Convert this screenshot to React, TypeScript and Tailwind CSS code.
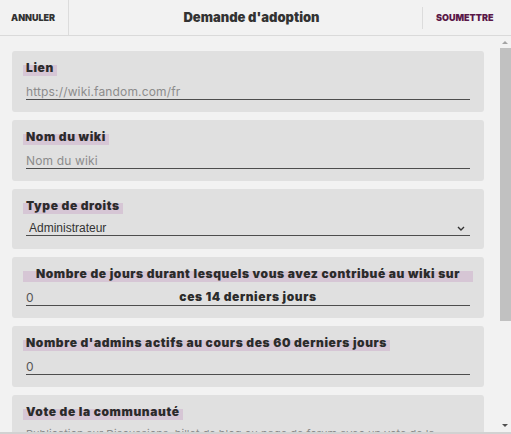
import React from "react";

const labelFont = { fontFamily: "Inter, 'Noto Sans', sans-serif" };

function Label({ children, center }: { children: React.ReactNode; center?: boolean }) {
  return (
    <div className={`flex h-[20px] items-start ${center ? "justify-center" : ""}`}>
      <span
        style={labelFont}
        className={`-mx-[3px] h-[20px] px-[3px] text-[12px] leading-[23px] font-black tracking-[0.6px] text-[#2b2b2b] bg-[linear-gradient(to_bottom,transparent_9px,#d6c6d5_9px)] ${center ? "text-center" : ""}`}
      >
        {children}
      </span>
    </div>
  );
}

function TextField({ value, placeholder }: { value?: string; placeholder?: string }) {
  return (
    <input
      readOnly
      value={value ?? ""}
      placeholder={placeholder}
      style={labelFont}
      className="block h-[24px] w-full border-b border-[#4d4d4d] bg-transparent pt-[8px] pb-[1px] text-[12px] leading-[14px] tracking-[0.15px] text-[#555] outline-none placeholder:text-[#8c8c8c]"
    />
  );
}

function Card({ children, className = "pb-[12px]" }: { children: React.ReactNode; className?: string }) {
  return <div className={`rounded-[3px] bg-[#e0e0e0] px-[14px] pt-[5px] ${className}`}>{children}</div>;
}

export default function App() {
  return (
    <div className="flex h-[434px] w-[511px] flex-col overflow-hidden bg-[#f2f2f2] text-[#333]" style={labelFont}>
      <header className="flex h-[36px] shrink-0 border-b border-[#dadada]">
        <button className="flex w-[69px] items-center border-r border-[#dcdcdc] pl-[11px] text-[9px] font-black text-[#333]">
          ANNULER
        </button>
        <h1 className="flex flex-1 items-center justify-center pl-[12px] text-[13px] font-black text-[#333]">
          Demande d'adoption
        </h1>
        <div className="flex w-[89px] items-center">
          <span className="h-[22px] w-px bg-[#dcdcdc]" />
          <button className="pl-[13px] text-[9px] font-black text-[#5a1848]">SOUMETTRE</button>
        </div>
      </header>

      <div className="flex min-h-0 flex-1 border-b-2 border-[#d2d2d2]">
        <main className="flex min-w-0 flex-1 flex-col gap-[8px] overflow-hidden pt-[15px] pr-[15px] pl-[12px]">
          <Card>
            <Label>Lien</Label>
            <TextField placeholder="https://wiki.fandom.com/fr" />
          </Card>
          <Card>
            <Label>Nom du wiki</Label>
            <TextField placeholder="Nom du wiki" />
          </Card>
          <Card className="pb-[13px]">
            <Label>Type de droits</Label>
            <div className="relative">
              <select
                defaultValue="admin"
                style={{ fontFamily: "'Liberation Sans', Arial, sans-serif" }}
                className="block h-[22px] w-full appearance-none border-b border-[#4d4d4d] bg-transparent pt-[7px] pl-[3px] text-[12px] leading-[14px] text-[#333] outline-none"
              >
                <option value="admin">Administrateur</option>
                <option value="bureaucrate">Bureaucrate</option>
              </select>
              <svg className="pointer-events-none absolute top-[12px] right-[5px]" width="8" height="5" viewBox="0 0 8 5">
                <path d="M1 1l3 3 3-3" fill="none" stroke="#333" strokeWidth="1.4" />
              </svg>
            </div>
          </Card>
          <Card>
            <Label center>Nombre de jours durant lesquels vous avez contribué au wiki sur ces 14 derniers jours</Label>
            <TextField value="0" />
          </Card>
          <Card>
            <Label>Nombre d'admins actifs au cours des 60 derniers jours</Label>
            <TextField value="0" />
          </Card>
          <Card>
            <Label>Vote de la communauté</Label>
            <p className="mt-[7px] text-[11px] leading-[15px] text-[#8c8c8c]">
              Publication sur Discussions, billet de blog ou page de forum avec un vote de la communauté
            </p>
          </Card>
        </main>

        <div className="flex w-[12px] shrink-0 flex-col">
          <div className="flex h-[12px] items-center justify-center">
            <svg width="6" height="3" viewBox="0 0 6 3">
              <path d="M0 3L3 0l3 3z" fill="#a3a3a3" />
            </svg>
          </div>
          <div className="flex-1">
            <div className="ml-[1px] h-[273px] bg-[#c1c1c1]" />
          </div>
          <div className="flex h-[14px] items-center justify-center">
            <svg width="6" height="3" viewBox="0 0 6 3">
              <path d="M0 0l3 3 3-3z" fill="#505050" />
            </svg>
          </div>
        </div>
      </div>
    </div>
  );
}
